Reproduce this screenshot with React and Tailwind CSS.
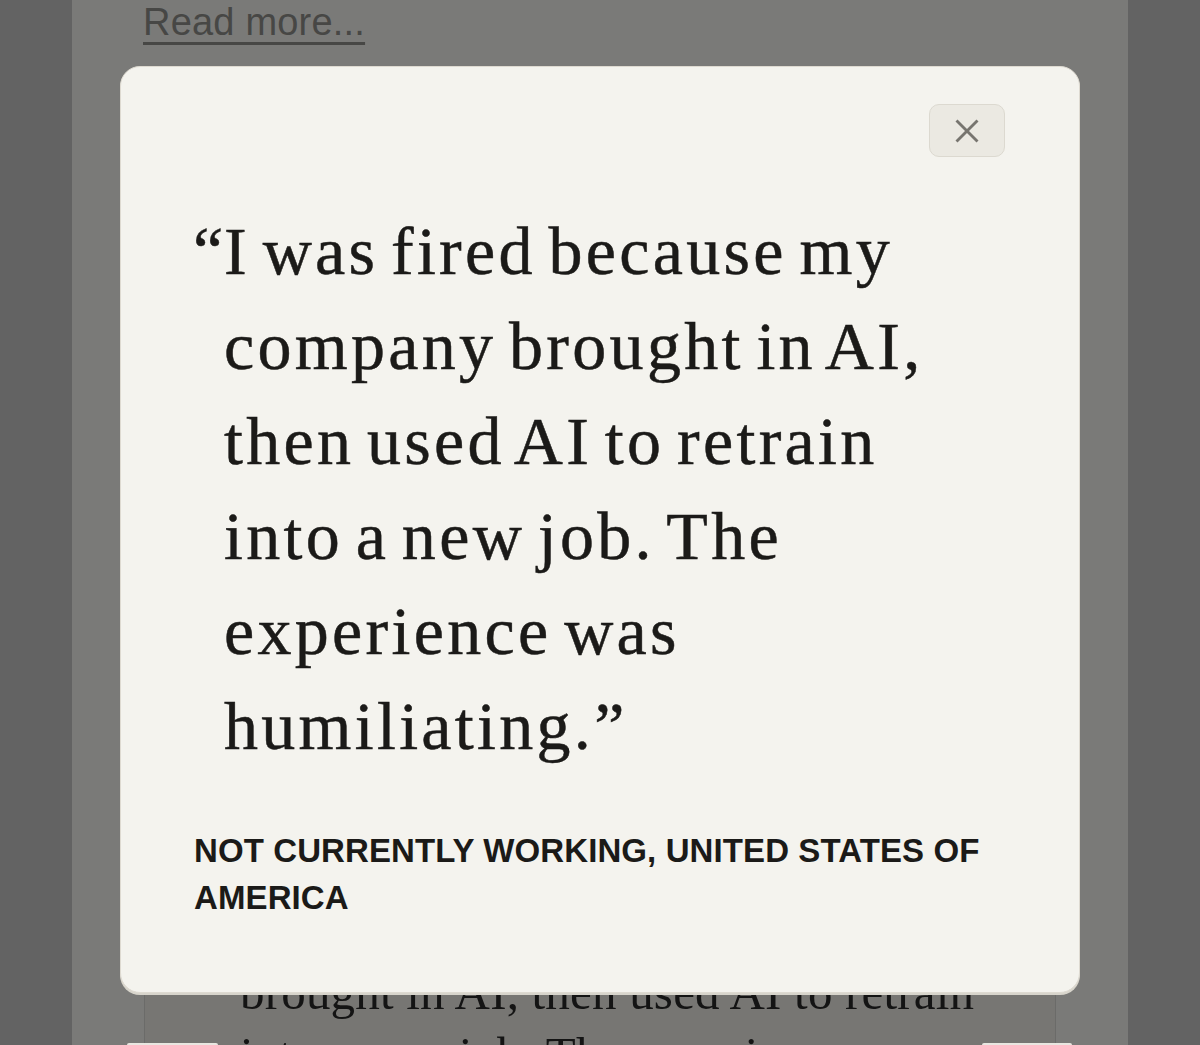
import React from 'react';

const serif = { fontFamily: '"Liberation Serif", "Times New Roman", serif' };
const sans = { fontFamily: '"Liberation Sans", Arial, sans-serif' };

const CloseIcon = () => (
  <svg width="24" height="24" viewBox="0 0 24 24" fill="none" stroke="#77756f" strokeWidth="2.8" strokeLinecap="butt">
    <path d="M1.5 1.5 22.5 22.5" />
    <path d="M22.5 1.5 1.5 22.5" />
  </svg>
);

const QuoteModal = () => (
  <div className="absolute left-[120px] top-[66px] w-[960px] rounded-[20px] border border-[#dedad1] bg-[#f4f3ee] pl-[73px] pr-[74px] pt-[37px] pb-[71px] shadow-[0_2px_0_#d8d5cc]">
    <div className="flex justify-end">
      <button className="flex h-[53px] w-[76px] items-center justify-center rounded-[10px] border border-[#dcd9d0] bg-[#ebe9e2]">
        <CloseIcon />
      </button>
    </div>

    {/* Quote */}
    <p
      className="mt-[47px] pl-[30px] -indent-[31px] text-[68px] leading-[95px] tracking-[3.3px] [word-spacing:-7.6px] text-[#1b1a18] [-webkit-text-stroke:0.5px_#1b1a18]"
      style={serif}
    >
      <span className="-mr-[2.5px]">“</span>I was fired because my<br />
      company brought in AI,<br />
      then used AI to retrain<br />
      into a new job. The<br />
      experience was<br />
      humiliating.”
    </p>

    <p
      className="mt-[53px] text-[33px] font-bold uppercase leading-[47px] tracking-[0.1px] text-[#1b1a18]"
      style={sans}
    >
      Not currently working, United States of America
    </p>
  </div>
);

export default function App() {
  return (
    <div className="relative h-[1045px] overflow-hidden bg-[#636363]">
      <div className="mx-[72px] h-full bg-[#7a7a78] px-[72px]">
        <div className="pt-[3px]">
          <a
            href="#"
            className="-ml-px text-[38px] leading-[38px] tracking-[0.2px] text-[#474745] underline decoration-[3px] underline-offset-[7px]"
            style={sans}
          >
            Read more...
          </a>
        </div>

        {/* card behind the dialog */}
        <div className="mt-[34px] h-[1100px] border border-[#6b6b69] bg-[#777673] pl-[95px] pt-[886px]">
          <div className="text-[49px] leading-[62px] tracking-[0.2px] text-[#141414]" style={serif}>
            <div>brought in AI, then used AI to retrain</div>
            <div>into a new job. The experience</div>
          </div>
        </div>
      </div>

      {/* bottom buttons peeking in */}
      <div className="absolute bottom-0 left-[127px] h-[2px] w-[91px] rounded-t-[4px] bg-[#e9e7e1]" />
      <div className="absolute bottom-0 left-[982px] h-[2px] w-[90px] rounded-t-[4px] bg-[#e9e7e1]" />

      <QuoteModal />
    </div>
  );
}
